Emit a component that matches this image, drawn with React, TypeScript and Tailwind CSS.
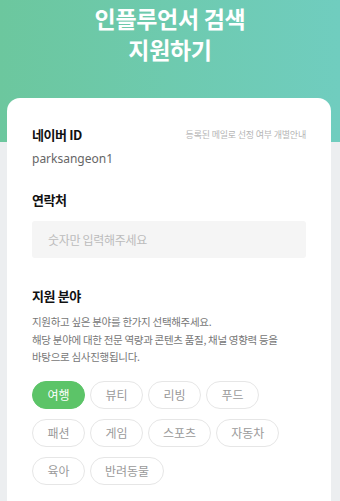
import React from "react";

const chips = [
  ["여행", "뷰티", "리빙", "푸드"],
  ["패션", "게임", "스포츠", "자동차"],
  ["육아", "반려동물"],
];

export default function App() {
  return (
    <div
      className="relative w-[340px] h-[501px] overflow-hidden bg-[#eceef0]"
      style={{ fontFamily: '"Noto Sans CJK KR", "Noto Sans", sans-serif' }}
    >
      <div className="h-[142px] bg-gradient-to-r from-[#6cc79e] to-[#70cdbf] flex flex-col items-center pt-[3px]">
        <div className="text-white font-bold text-[23px] leading-[31px] text-center tracking-[-0.3px]">
          인플루언서 검색
          <br />
          지원하기
        </div>
      </div>
      <div className="absolute left-[7px] top-[98px] w-[324px] h-[420px] bg-white rounded-[13px] px-[25px] pt-[27px]">
        <div className="flex items-center justify-between">
          <div className="text-[13px] font-bold text-[#111] leading-[20px] tracking-[-0.4px]">네이버 ID</div>
          <div className="text-[9px] text-[#b5b5b5] leading-[14px] tracking-[-0.2px]">등록된 메일로 선정 여부 개별안내</div>
        </div>
        <div className="mt-[5px] text-[12px] text-[#666] leading-[18px]" style={{ fontFamily: '"Noto Sans", sans-serif' }}>
          parksangeon1
        </div>
        <div className="mt-[22px] text-[13px] font-bold text-[#111] leading-[20px] tracking-[-0.4px]">연락처</div>
        <div className="mt-[11px] h-[37px] bg-[#f5f5f5] rounded-[3px] flex items-center pl-[16px] text-[12px] text-[#bcbcbc] tracking-[-0.3px]">
          숫자만 입력해주세요
        </div>
        <div className="mt-[28px] text-[13px] font-bold text-[#111] leading-[20px] tracking-[-0.4px]">지원 분야</div>
        <div className="mt-[7px] text-[10.5px] text-[#777] leading-[17.5px] tracking-[-0.3px]">
          지원하고 싶은 분야를 한가지 선택해주세요.
          <br />
          해당 분야에 대한 전문 역량과 콘텐츠 품질, 채널 영향력 등을
          <br />
          바탕으로 심사진행됩니다.
        </div>
        <div className="mt-[15px] flex flex-col gap-[10px]">
          {chips.map((row, i) => (
            <div key={i} className="flex gap-[5px]">
              {row.map((c) => {
                const active = c === "여행";
                return (
                  <div
                    key={c}
                    className={
                      active
                        ? "h-[28px] min-w-[53px] px-[14px] rounded-full bg-[#5cc468] border border-[#5cc468] text-white text-[12px] flex items-center justify-center"
                        : "h-[28px] min-w-[53px] px-[14px] rounded-full bg-white border border-[#e6e6e6] text-[#9a9a9a] text-[12px] flex items-center justify-center"
                    }
                  >
                    {c}
                  </div>
                );
              })}
            </div>
          ))}
        </div>
      </div>
    </div>
  );
}
